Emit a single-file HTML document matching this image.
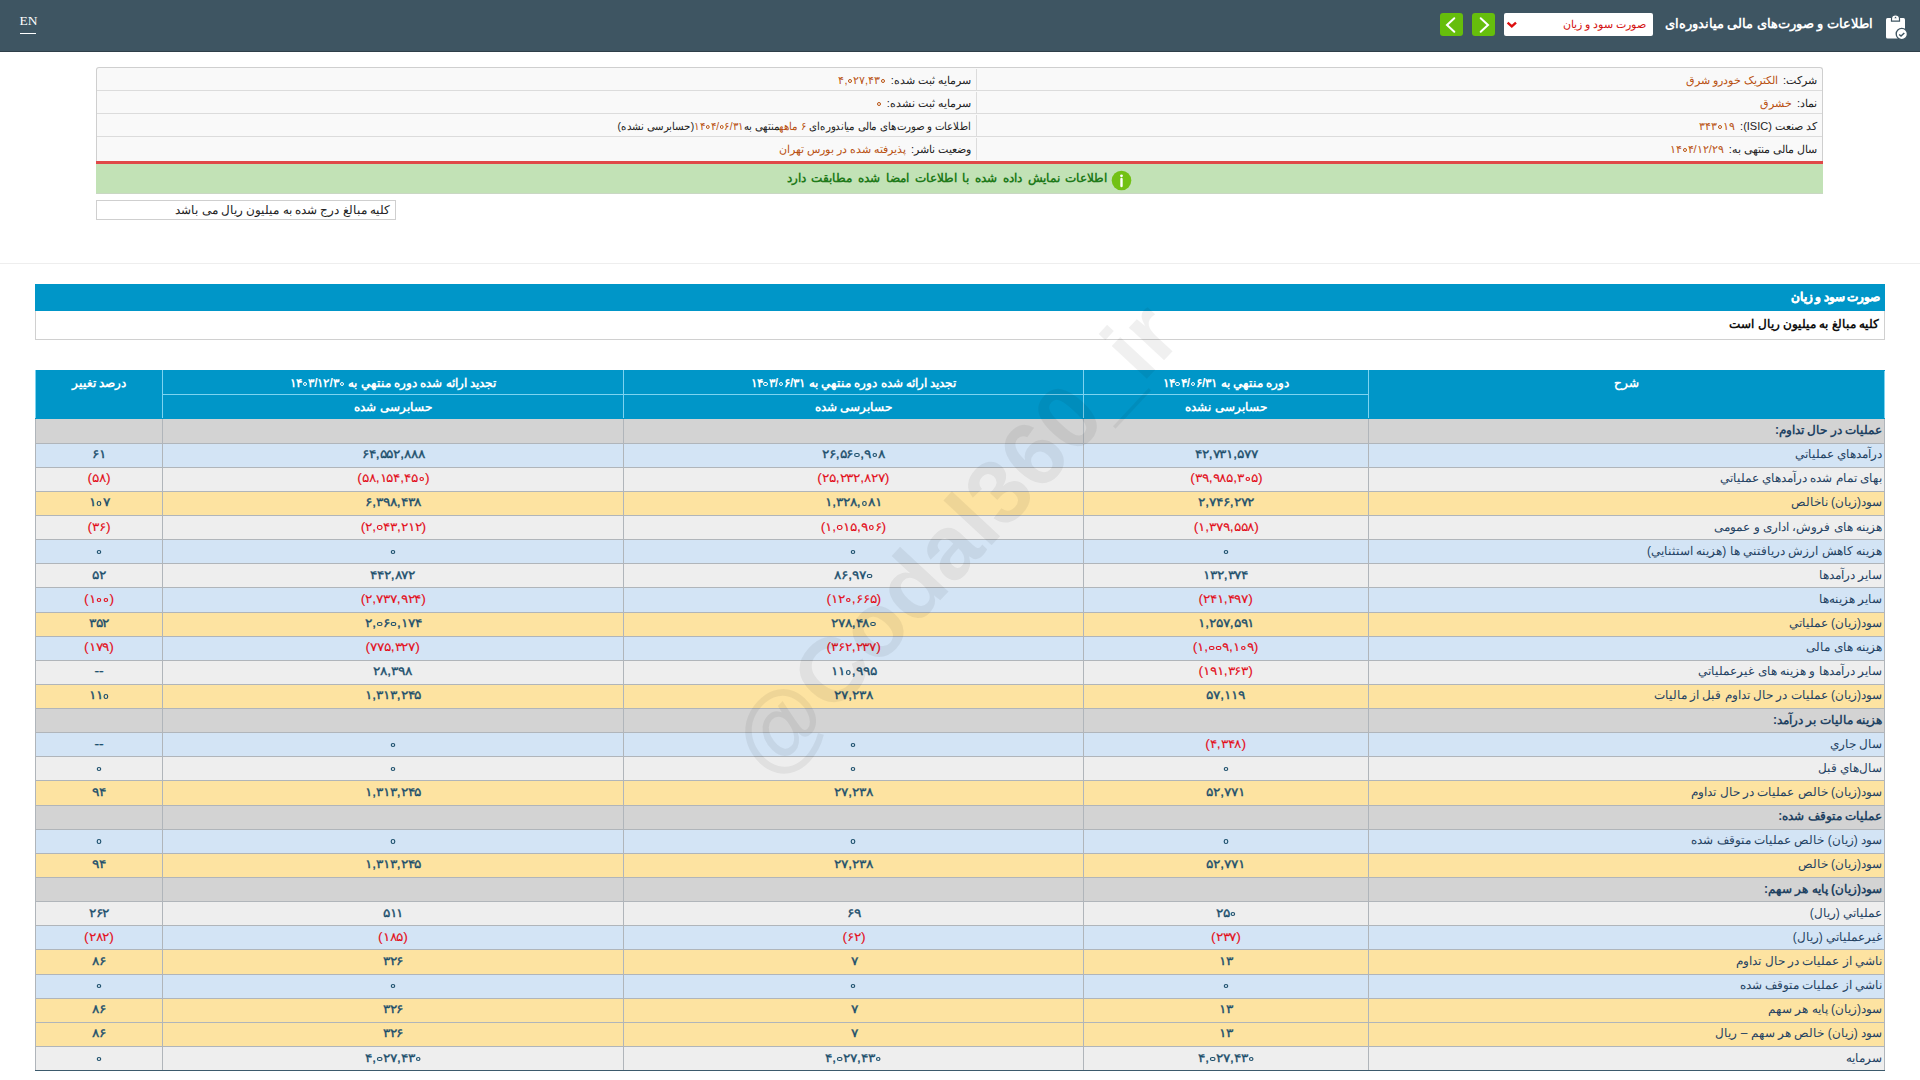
<!DOCTYPE html>
<html lang="fa">
<head>
<meta charset="utf-8">
<style>
*{margin:0;padding:0;box-sizing:border-box}
html,body{width:1920px;height:1080px;overflow:hidden;background:#fff}
body{font-family:"Liberation Sans",sans-serif;font-size:12px;color:#222;position:relative}
.abs{position:absolute}
#hdr{left:0;top:0;width:1920px;height:52px;background:#3e5562;border-bottom:1px solid #2e3f49}
#en{left:19.5px;top:13px;font-family:"Liberation Serif",serif;font-size:13.5px;color:#fff;line-height:16px}
#enu{left:20px;top:33px;width:16px;height:1px;background:#fff}
#ttl{right:47px;top:13px;font-size:13px;font-weight:bold;color:#fff;direction:rtl;line-height:22px;white-space:nowrap}
#sel{left:1504px;top:13px;width:149px;height:23px;background:#fff;border-radius:2px}
#seltx{right:7px;top:3px;color:#d40f0f;font-size:11px;direction:rtl;white-space:nowrap;line-height:16px}
.gbtn{top:13px;width:23px;height:23px;background:#66be0c;border-radius:3px}
/* info box */
#info{left:96px;top:67px;width:1727px;height:94px;border:1px solid #cfcfcf;border-bottom:none;border-radius:3px 3px 0 0;background:#f9f9f9;overflow:hidden}
.irow{position:absolute;left:0;width:1725px;height:23px;border-bottom:1px solid #dcdcdc}
.icell{position:absolute;top:1px;height:22px;direction:rtl;white-space:nowrap;line-height:22px;font-size:11px;color:#222;text-align:right}
.icell.r{right:0;width:846px;padding-right:5px;border-left:1px solid #dcdcdc}
.icell.l{right:846px;width:879px;padding-right:5px}
.v{color:#b8500f;margin-right:2px}
#redl{left:96px;top:161px;width:1727px;height:3px;background:#e04848}
#green{left:96px;top:164px;width:1727px;height:30px;background:#c2e2b6;border-bottom:1px solid #c9d7c3}
#gtx{left:0;width:1702px;top:4px;text-align:center;direction:rtl;color:#1f7a1a;font-weight:bold;font-size:12px;word-spacing:2.4px;line-height:20px;white-space:nowrap}
#note{left:96px;top:200px;width:300px;height:20px;border:1px solid #cfcfcf;direction:rtl;text-align:right;padding-right:5px;line-height:18px;font-size:12px;color:#222;white-space:nowrap}
#sep{left:0;top:263px;width:1920px;height:1px;background:#eeeeee}
/* title */
#tbar{left:35px;top:284px;width:1850px;height:27px;background:#0096c8;color:#fff;font-weight:bold;direction:rtl;text-align:right;padding-right:5px;line-height:27px;font-size:12px;word-spacing:-1px;-webkit-text-stroke:0.35px #fff;white-space:nowrap}
#tsub{left:35px;top:311px;width:1850px;height:29px;background:#fff;border:1px solid #d0d0d0;border-top:none;direction:rtl;text-align:right;padding-right:5px;line-height:27px;font-weight:bold;font-size:11.9px;color:#111;white-space:nowrap}
/* table */
#tbl{position:absolute;left:35px;top:370px;width:1849px;border-collapse:collapse;table-layout:fixed;direction:rtl}
#tbl th{background:#0096c8;color:#fff;font-weight:bold;font-size:12px;border:1px solid #7dd3f0;border-bottom-color:#7dd3f0;height:24.2px;line-height:16px;padding:0;vertical-align:top;padding-top:4px;white-space:nowrap}
#tbl th.top{border-top-color:#0096c8}
#tbl tr.h2 th,#tbl th[rowspan]{border-bottom-color:#0096c8}
#tbl td{height:24.15px;border:1px solid #b0b5ba;padding:0 0 2px 0;font-size:12px;color:#1f4262;text-align:center;white-space:nowrap;line-height:16px}
#tbl td.lb{text-align:right;padding-right:2px}
#tbl tr.s td{background:#d3d3d3}
#tbl tr.s td.lb{font-weight:bold}
#tbl tr.b td{background:#d3e4f5}
#tbl tr.g td{background:#eeeeee}
#tbl tr.y td{background:#fde3a1}
#tbl td.num{font-weight:normal;color:#1c4f6c;font-size:12px;-webkit-text-stroke:0.3px currentColor}
.nv{display:inline-block;transform:scaleX(1.15);unicode-bidi:isolate}
.z{display:inline-block;width:.51em;height:.75em;position:relative;vertical-align:baseline}
.z:after{content:'';position:absolute;left:.075em;top:.33em;width:.36em;height:.36em;border:.115em solid currentColor;border-radius:50%;box-sizing:border-box}
.nd{unicode-bidi:isolate;direction:ltr}
#tbl td.n{color:#e3101c;-webkit-text-stroke:0.1px currentColor}
#tbl tr:last-child td{border-bottom:1px solid #3d5a6c}
#wm{left:555px;top:489px;width:800px;text-align:center;transform:rotate(-47deg);font-size:91px;font-weight:bold;color:rgba(0,0,0,0.06);white-space:nowrap;line-height:100px;pointer-events:none}
</style>
</head>
<body>
<div id="hdr" class="abs">
  <div id="en" class="abs">EN</div>
  <div id="enu" class="abs"></div>
  <div id="ttl" class="abs">اطلاعات و صورت‌های مالی میاندوره‌ای</div>
  <div id="sel" class="abs"><div id="seltx" class="abs">صورت سود و زیان</div>
    <svg class="abs" style="left:2px;top:8px" width="12" height="8" viewBox="0 0 12 8"><path d="M1.6 1.6 L5.8 5.4 L10 1.6" stroke="#dd0f0f" stroke-width="2.4" fill="none"/></svg>
  </div>
  <div class="gbtn abs" style="left:1440px"><svg width="23" height="23" viewBox="0 0 23 23"><path d="M14.3 5.2 L7 12 L14.3 18.8" stroke="#fff" stroke-width="2" fill="none" stroke-linecap="round"/></svg></div>
  <div class="gbtn abs" style="left:1472px"><svg width="23" height="23" viewBox="0 0 23 23"><path d="M8.7 5.2 L16 12 L8.7 18.8" stroke="#fff" stroke-width="2" fill="none" stroke-linecap="round"/></svg></div>
  <svg class="abs" style="left:1884px;top:13px" width="26" height="28" viewBox="0 0 26 28">
    <rect x="2" y="5" width="19" height="20.5" rx="1.5" fill="#fff"/>
    <path d="M7.5 8.2 L7.5 5.5 Q7.5 1.8 11.5 1.8 Q15.5 1.8 15.5 5.5 L15.5 8.2 Z" fill="#fff" stroke="#3e5562" stroke-width="1.2"/>
    <path d="M10.3 5.3 L11.5 3.6 L12.7 5.3 Z" fill="#3e5562"/>
    <circle cx="17.8" cy="21" r="5.6" fill="#fff" stroke="#3e5562" stroke-width="1.3"/>
    <path d="M15.2 21.5 L17 23 L20.3 20" stroke="#3e5562" stroke-width="1.5" fill="none"/>
  </svg>
</div>

<div id="info" class="abs">
  <div class="irow" style="top:0">
    <div class="icell r">شرکت: <span class="v">الکتریک خودرو شرق</span></div>
    <div class="icell l">سرمایه ثبت شده: <span class="v"><span class="nd">۴,<i class="z"></i>۲۷,۴۳<i class="z"></i></span></span></div>
  </div>
  <div class="irow" style="top:23px">
    <div class="icell r">نماد: <span class="v">خشرق</span></div>
    <div class="icell l">سرمایه ثبت نشده: <span class="v"><span class="nd"><i class="z"></i></span></span></div>
  </div>
  <div class="irow" style="top:46px">
    <div class="icell r">کد صنعت (ISIC): <span class="v"><span class="nd">۳۴۳<i class="z"></i>۱۹</span></span></div>
    <div class="icell l"><span style="display:inline-block;transform:scaleX(0.93);transform-origin:100% 50%">اطلاعات و صورت‌های مالی میاندوره‌ای <span style="color:#b8500f"><span class="nd">۶</span> ماهه</span>منتهی به<span style="color:#b8500f"><span class="nd">۱۴<i class="z"></i>۴/<i class="z"></i>۶/۳۱</span></span>(حسابرسی نشده)</span></div>
  </div>
  <div class="irow" style="top:69px;border-bottom:none">
    <div class="icell r">سال مالی منتهی به: <span class="v"><span class="nd">۱۴<i class="z"></i>۴/۱۲/۲۹</span></span></div>
    <div class="icell l">وضعیت ناشر: <span class="v">پذیرفته شده در بورس تهران</span></div>
  </div>
</div>
<div id="redl" class="abs"></div>
<div id="green" class="abs"><div id="gtx" class="abs">اطلاعات نمایش داده شده با اطلاعات امضا شده مطابقت دارد</div>
<svg class="abs" style="left:1015px;top:6px" width="21" height="21" viewBox="0 0 21 21"><circle cx="10.5" cy="10.5" r="9.8" fill="#72c114"/><circle cx="10.5" cy="5.8" r="1.4" fill="#fff"/><path d="M10.5 9 L10.5 16" stroke="#fff" stroke-width="2.4" stroke-linecap="round"/></svg></div>
<div id="note" class="abs">کلیه مبالغ درج شده به میلیون ریال می باشد</div>
<div id="sep" class="abs"></div>

<div id="tbar" class="abs">صورت سود و زیان</div>
<div id="tsub" class="abs">کلیه مبالغ به میلیون ریال است</div>

<!--TABLE-->
<table id="tbl">
<colgroup><col style="width:516px"><col style="width:285px"><col style="width:460px"><col style="width:461px"><col style="width:127px"></colgroup>
<tr><th rowspan="2" class="top">شرح</th><th class="top">دوره منتهي به <span class="nd">۱۴<i class="z"></i>۴/<i class="z"></i>۶/۳۱</span></th><th class="top">تجديد ارائه شده دوره منتهي به <span class="nd">۱۴<i class="z"></i>۳/<i class="z"></i>۶/۳۱</span></th><th class="top">تجديد ارائه شده دوره منتهي به <span class="nd">۱۴<i class="z"></i>۳/۱۲/۳<i class="z"></i></span></th><th rowspan="2" class="top">درصد تغيير</th></tr>
<tr class="h2"><th>حسابرسی نشده</th><th>حسابرسی شده</th><th>حسابرسی شده</th></tr>
<tr class="s"><td class="lb">عملیات در حال تداوم:</td><td class="num"><span class="nv" dir="ltr"></span></td><td class="num"><span class="nv" dir="ltr"></span></td><td class="num"><span class="nv" dir="ltr"></span></td><td class="num"><span class="nv" dir="ltr"></span></td></tr>
<tr class="b"><td class="lb">درآمدهاي عملياتي</td><td class="num"><span class="nv" dir="ltr">۴۲,۷۳۱,۵۷۷</span></td><td class="num"><span class="nv" dir="ltr">۲۶,۵۶<i class="z"></i>,۹<i class="z"></i>۸</span></td><td class="num"><span class="nv" dir="ltr">۶۴,۵۵۲,۸۸۸</span></td><td class="num"><span class="nv" dir="ltr">۶۱</span></td></tr>
<tr class="g"><td class="lb">بهای تمام شده درآمدهاي عملياتي</td><td class="num n"><span class="nv" dir="ltr">(۳۹,۹۸۵,۳<i class="z"></i>۵)</span></td><td class="num n"><span class="nv" dir="ltr">(۲۵,۲۳۲,۸۲۷)</span></td><td class="num n"><span class="nv" dir="ltr">(۵۸,۱۵۴,۴۵<i class="z"></i>)</span></td><td class="num n"><span class="nv" dir="ltr">(۵۸)</span></td></tr>
<tr class="y"><td class="lb">سود(زيان) ناخالص</td><td class="num"><span class="nv" dir="ltr">۲,۷۴۶,۲۷۲</span></td><td class="num"><span class="nv" dir="ltr">۱,۳۲۸,<i class="z"></i>۸۱</span></td><td class="num"><span class="nv" dir="ltr">۶,۳۹۸,۴۳۸</span></td><td class="num"><span class="nv" dir="ltr">۱<i class="z"></i>۷</span></td></tr>
<tr class="g"><td class="lb">هزينه هاى فروش، اداری و عمومی</td><td class="num n"><span class="nv" dir="ltr">(۱,۳۷۹,۵۵۸)</span></td><td class="num n"><span class="nv" dir="ltr">(۱,<i class="z"></i>۱۵,۹<i class="z"></i>۶)</span></td><td class="num n"><span class="nv" dir="ltr">(۲,<i class="z"></i>۴۳,۲۱۲)</span></td><td class="num n"><span class="nv" dir="ltr">(۳۶)</span></td></tr>
<tr class="b"><td class="lb">هزينه کاهش ارزش دريافتني ها (هزينه استثنايي)</td><td class="num"><span class="nv" dir="ltr"><i class="z"></i></span></td><td class="num"><span class="nv" dir="ltr"><i class="z"></i></span></td><td class="num"><span class="nv" dir="ltr"><i class="z"></i></span></td><td class="num"><span class="nv" dir="ltr"><i class="z"></i></span></td></tr>
<tr class="g"><td class="lb">ساير درآمدها</td><td class="num"><span class="nv" dir="ltr">۱۳۲,۳۷۴</span></td><td class="num"><span class="nv" dir="ltr">۸۶,۹۷<i class="z"></i></span></td><td class="num"><span class="nv" dir="ltr">۴۴۲,۸۷۲</span></td><td class="num"><span class="nv" dir="ltr">۵۲</span></td></tr>
<tr class="b"><td class="lb">ساير هزينه‌ها</td><td class="num n"><span class="nv" dir="ltr">(۲۴۱,۴۹۷)</span></td><td class="num n"><span class="nv" dir="ltr">(۱۲<i class="z"></i>,۶۶۵)</span></td><td class="num n"><span class="nv" dir="ltr">(۲,۷۳۷,۹۲۴)</span></td><td class="num n"><span class="nv" dir="ltr">(۱<i class="z"></i><i class="z"></i>)</span></td></tr>
<tr class="y"><td class="lb">سود(زيان) عملياتي</td><td class="num"><span class="nv" dir="ltr">۱,۲۵۷,۵۹۱</span></td><td class="num"><span class="nv" dir="ltr">۲۷۸,۴۸<i class="z"></i></span></td><td class="num"><span class="nv" dir="ltr">۲,<i class="z"></i>۶<i class="z"></i>,۱۷۴</span></td><td class="num"><span class="nv" dir="ltr">۳۵۲</span></td></tr>
<tr class="b"><td class="lb">هزينه هاى مالى</td><td class="num n"><span class="nv" dir="ltr">(۱,<i class="z"></i><i class="z"></i>۹,۱<i class="z"></i>۹)</span></td><td class="num n"><span class="nv" dir="ltr">(۳۶۲,۲۳۷)</span></td><td class="num n"><span class="nv" dir="ltr">(۷۷۵,۳۲۷)</span></td><td class="num n"><span class="nv" dir="ltr">(۱۷۹)</span></td></tr>
<tr class="g"><td class="lb">ساير درآمدها و هزينه هاى غيرعملياتي</td><td class="num n"><span class="nv" dir="ltr">(۱۹۱,۳۶۳)</span></td><td class="num"><span class="nv" dir="ltr">۱۱<i class="z"></i>,۹۹۵</span></td><td class="num"><span class="nv" dir="ltr">۲۸,۳۹۸</span></td><td class="num"><span class="nv" dir="ltr">--</span></td></tr>
<tr class="y"><td class="lb">سود(زيان) عمليات در حال تداوم قبل از ماليات</td><td class="num"><span class="nv" dir="ltr">۵۷,۱۱۹</span></td><td class="num"><span class="nv" dir="ltr">۲۷,۲۳۸</span></td><td class="num"><span class="nv" dir="ltr">۱,۳۱۳,۲۴۵</span></td><td class="num"><span class="nv" dir="ltr">۱۱<i class="z"></i></span></td></tr>
<tr class="s"><td class="lb">هزينه ماليات بر درآمد:</td><td class="num"><span class="nv" dir="ltr"></span></td><td class="num"><span class="nv" dir="ltr"></span></td><td class="num"><span class="nv" dir="ltr"></span></td><td class="num"><span class="nv" dir="ltr"></span></td></tr>
<tr class="b"><td class="lb">سال جاري</td><td class="num n"><span class="nv" dir="ltr">(۴,۳۴۸)</span></td><td class="num"><span class="nv" dir="ltr"><i class="z"></i></span></td><td class="num"><span class="nv" dir="ltr"><i class="z"></i></span></td><td class="num"><span class="nv" dir="ltr">--</span></td></tr>
<tr class="g"><td class="lb">سال‌هاي قبل</td><td class="num"><span class="nv" dir="ltr"><i class="z"></i></span></td><td class="num"><span class="nv" dir="ltr"><i class="z"></i></span></td><td class="num"><span class="nv" dir="ltr"><i class="z"></i></span></td><td class="num"><span class="nv" dir="ltr"><i class="z"></i></span></td></tr>
<tr class="y"><td class="lb">سود(زيان) خالص عمليات در حال تداوم</td><td class="num"><span class="nv" dir="ltr">۵۲,۷۷۱</span></td><td class="num"><span class="nv" dir="ltr">۲۷,۲۳۸</span></td><td class="num"><span class="nv" dir="ltr">۱,۳۱۳,۲۴۵</span></td><td class="num"><span class="nv" dir="ltr">۹۴</span></td></tr>
<tr class="s"><td class="lb">عمليات متوقف شده:</td><td class="num"><span class="nv" dir="ltr"></span></td><td class="num"><span class="nv" dir="ltr"></span></td><td class="num"><span class="nv" dir="ltr"></span></td><td class="num"><span class="nv" dir="ltr"></span></td></tr>
<tr class="b"><td class="lb">سود (زيان) خالص عمليات متوقف شده</td><td class="num"><span class="nv" dir="ltr"><i class="z"></i></span></td><td class="num"><span class="nv" dir="ltr"><i class="z"></i></span></td><td class="num"><span class="nv" dir="ltr"><i class="z"></i></span></td><td class="num"><span class="nv" dir="ltr"><i class="z"></i></span></td></tr>
<tr class="y"><td class="lb">سود(زيان) خالص</td><td class="num"><span class="nv" dir="ltr">۵۲,۷۷۱</span></td><td class="num"><span class="nv" dir="ltr">۲۷,۲۳۸</span></td><td class="num"><span class="nv" dir="ltr">۱,۳۱۳,۲۴۵</span></td><td class="num"><span class="nv" dir="ltr">۹۴</span></td></tr>
<tr class="s"><td class="lb">سود(زيان) پايه هر سهم:</td><td class="num"><span class="nv" dir="ltr"></span></td><td class="num"><span class="nv" dir="ltr"></span></td><td class="num"><span class="nv" dir="ltr"></span></td><td class="num"><span class="nv" dir="ltr"></span></td></tr>
<tr class="g"><td class="lb">عملياتي (ريال)</td><td class="num"><span class="nv" dir="ltr">۲۵<i class="z"></i></span></td><td class="num"><span class="nv" dir="ltr">۶۹</span></td><td class="num"><span class="nv" dir="ltr">۵۱۱</span></td><td class="num"><span class="nv" dir="ltr">۲۶۲</span></td></tr>
<tr class="b"><td class="lb">غيرعملياتي (ريال)</td><td class="num n"><span class="nv" dir="ltr">(۲۳۷)</span></td><td class="num n"><span class="nv" dir="ltr">(۶۲)</span></td><td class="num n"><span class="nv" dir="ltr">(۱۸۵)</span></td><td class="num n"><span class="nv" dir="ltr">(۲۸۲)</span></td></tr>
<tr class="y"><td class="lb">ناشي از عمليات در حال تداوم</td><td class="num"><span class="nv" dir="ltr">۱۳</span></td><td class="num"><span class="nv" dir="ltr">۷</span></td><td class="num"><span class="nv" dir="ltr">۳۲۶</span></td><td class="num"><span class="nv" dir="ltr">۸۶</span></td></tr>
<tr class="b"><td class="lb">ناشي از عمليات متوقف شده</td><td class="num"><span class="nv" dir="ltr"><i class="z"></i></span></td><td class="num"><span class="nv" dir="ltr"><i class="z"></i></span></td><td class="num"><span class="nv" dir="ltr"><i class="z"></i></span></td><td class="num"><span class="nv" dir="ltr"><i class="z"></i></span></td></tr>
<tr class="y"><td class="lb">سود(زيان) پايه هر سهم</td><td class="num"><span class="nv" dir="ltr">۱۳</span></td><td class="num"><span class="nv" dir="ltr">۷</span></td><td class="num"><span class="nv" dir="ltr">۳۲۶</span></td><td class="num"><span class="nv" dir="ltr">۸۶</span></td></tr>
<tr class="y"><td class="lb">سود (زيان) خالص هر سهم – ريال</td><td class="num"><span class="nv" dir="ltr">۱۳</span></td><td class="num"><span class="nv" dir="ltr">۷</span></td><td class="num"><span class="nv" dir="ltr">۳۲۶</span></td><td class="num"><span class="nv" dir="ltr">۸۶</span></td></tr>
<tr class="g"><td class="lb">سرمايه</td><td class="num"><span class="nv" dir="ltr">۴,<i class="z"></i>۲۷,۴۳<i class="z"></i></span></td><td class="num"><span class="nv" dir="ltr">۴,<i class="z"></i>۲۷,۴۳<i class="z"></i></span></td><td class="num"><span class="nv" dir="ltr">۴,<i class="z"></i>۲۷,۴۳<i class="z"></i></span></td><td class="num"><span class="nv" dir="ltr"><i class="z"></i></span></td></tr>
</table>
<!--/TABLE-->

<div id="wm" class="abs">@Codal360_ir</div>
</body>
</html>
